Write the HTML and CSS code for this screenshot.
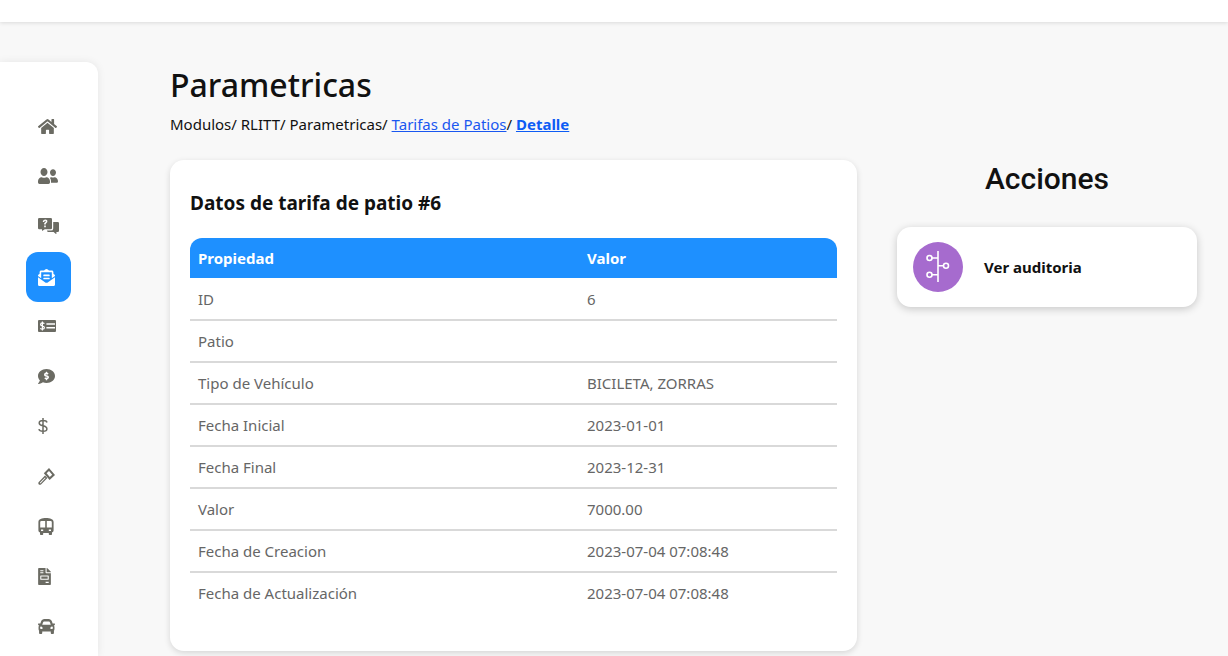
FILE: index.html
```html
<!DOCTYPE html>
<html lang="es">
<head>
<meta charset="utf-8">
<title>Parametricas</title>
<link rel="stylesheet" href="styles.css">
</head>
<body>
<header class="topbar"></header>
<div class="shell">
  <nav class="sidebar">
    <a class="nav-item"><svg class="ico i-home" viewBox="0 0 576 512"><path d="M280.37 148.26L96 300.11V464a16 16 0 0 0 16 16l112.06-.29a16 16 0 0 0 15.92-16V368a16 16 0 0 1 16-16h64a16 16 0 0 1 16 16v95.64a16 16 0 0 0 16 16.05L464 480a16 16 0 0 0 16-16V300L295.67 148.26a12.19 12.19 0 0 0-15.3 0zM571.6 251.47L488 182.56V44.05a12 12 0 0 0-12-12h-56a12 12 0 0 0-12 12v72.61L318.47 43a48 48 0 0 0-61 0L4.34 251.47a12 12 0 0 0-1.6 16.9l25.5 31A12 12 0 0 0 45.15 301l235.22-193.74a12.19 12.19 0 0 1 15.3 0L530.9 301a12 12 0 0 0 16.9-1.6l25.5-31a12 12 0 0 0-1.7-16.93z"/></svg></a>
    <a class="nav-item"><svg class="ico i-users" viewBox="0 32 640 448" preserveAspectRatio="none"><path d="M192 256c61.9 0 112-50.1 112-112S253.9 32 192 32 80 82.1 80 144s50.1 112 112 112zm76.8 32h-8.3c-20.8 10-43.9 16-68.5 16s-47.6-6-68.5-16h-8.3C51.6 288 0 339.6 0 403.2V432c0 26.5 21.5 48 48 48h288c26.5 0 48-21.5 48-48v-28.8c0-63.6-51.6-115.2-115.2-115.2zM480 256c53 0 96-43 96-96s-43-96-96-96-96 43-96 96 43 96 96 96zm48 32h-3.8c-13.9 4.8-28.6 8-44.2 8s-30.3-3.2-44.2-8H432c-20.4 0-39.2 5.9-55.7 15.4 24.4 26.3 39.7 61.2 39.7 99.8v38.4c0 2.2-.5 4.3-.6 6.4H592c26.5 0 48-21.5 48-48 0-61.9-50.1-112-112-112z"/></svg></a>
    <a class="nav-item"><svg class="ico i-help" viewBox="0 0 21 16"><path fill-rule="evenodd" d="M1.2 0 H12.8 Q14 0 14 1.2 V10 Q14 11.2 12.8 11.2 H6.8 L4 13 V11.2 H1.2 Q0 11.2 0 10 V1.2 Q0 0 1.2 0 Z M4.7 4 H6.3 Q6.4 2.8 7.1 2.8 Q8.1 2.8 7.7 3.7 L6.2 5.3 V6.6 H7.8 V5.8 L9.2 4.2 Q10 1.4 7.1 1.4 Q4.9 1.4 4.7 4 Z M6.2 7.5 V9.2 H7.8 V7.5 Z"/><path d="M15.2 4 H19.8 Q21 4 21 5.2 V12.8 Q21 14 19.8 14 H18.4 V16.4 L15.6 14 H10 Q9 14 9 12.6 H13 Q15.2 12.6 15.2 10.4 Z"/></svg></a>
    <a class="nav-item is-active"><svg class="ico i-env" viewBox="0 0 512 512"><path d="M176 216h160c8.84 0 16-7.16 16-16v-16c0-8.84-7.16-16-16-16H176c-8.84 0-16 7.16-16 16v16c0 8.84 7.16 16 16 16zm-16 80c0 8.84 7.16 16 16 16h160c8.84 0 16-7.16 16-16v-16c0-8.84-7.16-16-16-16H176c-8.84 0-16 7.16-16 16v16zm96 121.13c-16.42 0-32.84-5.06-46.86-15.19L0 250.86V464c0 26.51 21.49 48 48 48h416c26.51 0 48-21.49 48-48V250.86L302.86 401.94c-14.02 10.12-30.44 15.19-46.86 15.19zm237.61-254.18c-8.85-6.94-17.24-13.47-29.61-22.81V96c0-26.51-21.49-48-48-48h-77.55c-3.04-2.2-5.87-4.26-9.04-6.56C312.6 29.17 279.2-.35 256 0c-23.2-.35-56.59 29.17-73.41 41.44-3.17 2.3-6 4.36-9.04 6.56H96c-26.51 0-48 21.49-48 48v44.14c-12.37 9.33-20.76 15.87-29.61 22.81A47.995 47.995 0 0 0 0 200.72v10.65l96 69.35V96h320v184.72l96-69.35v-10.65c0-14.74-6.78-28.67-18.39-37.77z"/></svg></a>
    <a class="nav-item"><svg class="ico i-money" viewBox="0 0 18 12"><rect width="18" height="12" rx="1"/><path class="knock" d="M6.3 3.7 Q5.9 2.9 4.4 2.9 Q2.6 2.9 2.6 4.4 Q2.6 5.6 4.4 6 Q6.4 6.4 6.4 7.7 Q6.4 9.1 4.4 9.1 Q2.8 9.1 2.4 8.2 M4.4 1.4 V10.6"/><path class="knock bars" d="M8.4 4 H17 M8.4 7.8 H17"/></svg></a>
    <a class="nav-item"><svg class="ico i-comment" viewBox="0 32 512 448" preserveAspectRatio="none"><path d="M256 32C114.62 32 0 125.12 0 240c0 49.56 21.41 95.01 57.02 130.74C44.46 421.05 2.7 465.97 2.2 466.5A7.995 7.995 0 0 0 8 480c66.26 0 115.99-31.75 140.6-51.38C181.29 440.92 217.59 448 256 448c141.38 0 256-93.12 256-208S397.38 32 256 32zm24 302.44V352c0 8.84-7.16 16-16 16h-16c-8.84 0-16-7.16-16-16v-17.73c-11.42-1.35-22.28-5.19-31.78-11.46-6.22-4.11-6.82-13.11-1.55-18.38l17.52-17.52c3.74-3.74 9.34-4.24 14.11-1.99 3.18 1.5 6.66 2.29 10.26 2.29h32.78c4.66 0 8.44-3.78 8.44-8.42 0-3.75-2.52-7.08-6.12-8.11l-50.07-14.3c-22.25-6.35-40.01-24.71-42.91-47.67-4.05-32.07 19.03-59.43 49.32-63.05V128c0-8.84 7.16-16 16-16h16c8.84 0 16 7.16 16 16v17.73c11.42 1.35 22.28 5.19 31.78 11.46 6.22 4.11 6.82 13.11 1.55 18.38l-17.52 17.52c-3.74 3.74-9.34 4.24-14.11 1.99-3.18-1.5-6.66-2.29-10.26-2.29h-32.78c-4.66 0-8.44 3.78-8.44 8.42 0 3.75 2.52 7.08 6.12 8.11l50.07 14.3c22.25 6.36 40.01 24.71 42.91 47.67 4.05 32.06-19.03 59.42-49.32 63.04z"/></svg></a>
    <a class="nav-item"><svg class="ico i-dollar" viewBox="0 0 10 16"><path d="M9 4.4 Q8.4 2.6 5 2.6 Q1.2 2.6 1.2 5 Q1.2 7.1 5 7.8 Q8.9 8.6 8.9 11 Q8.9 13.3 5 13.3 Q1.4 13.3 .9 11.2 M5 0 V16"/></svg></a>
    <a class="nav-item"><svg class="ico i-gavel" viewBox="0 0 17 17"><path fill-rule="evenodd" d="M11 0 L17 7 L11.6 12 L5.8 5.2 Z M11 3 L8.6 5.2 L11.8 9 L14.2 6.8 Z"/><path fill-rule="evenodd" d="M7 7.6 L9.4 10 L3 16.4 Q2 17.2 .8 16.4 Q-.2 15.2 .8 14 Z M7 9.4 L1.8 14.8 L2.4 15.4 L7.6 10 Z"/></svg></a>
    <a class="nav-item"><svg class="ico i-bus" viewBox="0 0 16 17"><path fill-rule="evenodd" d="M2 14.6 V16.2 Q2 17 2.8 17 H4.4 Q5.2 17 5.2 16.2 V15 H10.8 V16.2 Q10.8 17 11.6 17 H13.2 Q14 17 14 16.2 V14.6 Q15.6 14 15.6 12.6 V4 C15.6 1 12 0 8 0 C4 0 .4 1 .4 4 V12.6 Q.4 14 2 14.6 Z M3.4 3 H7.2 V9.6 H2.2 V4.2 Q2.2 3 3.4 3 Z M8.8 3 H12.6 Q13.8 3 13.8 4.2 V9.6 H8.8 Z M3 11.6 H5.2 V13 H3 Z M10.8 11.6 H13 V13 H10.8 Z"/></svg></a>
    <a class="nav-item"><svg class="ico i-file" viewBox="0 0 384 512"><path d="M288 256H96v64h192v-64zm89-151L279.1 7c-4.5-4.5-10.6-7-17-7H256v128h128v-6.1c0-6.3-2.5-12.4-7-16.9zm-153 31V0H24C10.7 0 0 10.7 0 24v464c0 13.3 10.7 24 24 24h336c13.3 0 24-10.7 24-24V160H248c-13.2 0-24-10.8-24-24zM64 72c0-4.42 3.58-8 8-8h80c4.42 0 8 3.58 8 8v16c0 4.42-3.58 8-8 8H72c-4.42 0-8-3.58-8-8V72zm0 64c0-4.42 3.58-8 8-8h80c4.42 0 8 3.58 8 8v16c0 4.42-3.58 8-8 8H72c-4.42 0-8-3.58-8-8v-16zm256 304c0 4.42-3.58 8-8 8h-80c-4.42 0-8-3.58-8-8v-16c0-4.42 3.58-8 8-8h80c4.42 0 8 3.58 8 8v16zm0-200v96c0 8.84-7.16 16-16 16H80c-8.84 0-16-7.16-16-16v-96c0-8.84 7.16-16 16-16h224c8.84 0 16 7.16 16 16z"/></svg></a>
    <a class="nav-item"><svg class="ico i-car" viewBox="0 64 512 384" preserveAspectRatio="none"><path d="M499.99 176h-59.87l-16.64-41.6C406.38 91.63 365.57 64 319.5 64h-127c-46.06 0-86.88 27.63-103.99 70.4L71.87 176H12.01C4.2 176-1.53 183.34.37 190.91l6 24C7.7 220.25 12.5 224 18.01 224h20.07C24.65 235.73 16 252.78 16 272v48c0 16.12 6.16 30.67 16 41.93V416c0 17.67 14.33 32 32 32h32c17.67 0 32-14.33 32-32v-32h256v32c0 17.67 14.33 32 32 32h32c17.67 0 32-14.33 32-32v-54.07c9.84-11.25 16-25.8 16-41.93v-48c0-19.22-8.65-36.27-22.07-48H494c5.51 0 10.31-3.75 11.64-9.09l6-24c1.89-7.57-3.84-14.91-11.65-14.91zm-352.06-17.83c7.29-18.22 24.94-30.17 44.57-30.17h127c19.63 0 37.28 11.95 44.57 30.17L384 208H128l19.93-49.83zM96 319.8c-19.2 0-32-12.76-32-31.9S76.8 256 96 256s48 28.71 48 47.85-28.8 15.95-48 15.95zm320 0c-19.2 0-48 3.19-48-15.95S396.8 256 416 256s32 12.76 32 31.9-12.8 31.9-32 31.9z"/></svg></a>
  </nav>
  <main class="content">
    <section class="main-col">
      <h1 class="page-title">Parametricas</h1>
      <p class="crumbs">Modulos/ RLITT/ Parametricas/ <a class="crumb-link" href="#">Tarifas de Patios</a>/ <a class="crumb-current" href="#">Detalle</a></p>
      <div class="card">
        <h2 class="card-title">Datos de tarifa de patio #6</h2>
        <table class="data">
          <thead><tr><th>Propiedad</th><th>Valor</th></tr></thead>
          <tbody>
            <tr><td>ID</td><td>6</td></tr>
            <tr><td>Patio</td><td></td></tr>
            <tr><td>Tipo de Vehículo</td><td>BICILETA, ZORRAS</td></tr>
            <tr><td>Fecha Inicial</td><td>2023-01-01</td></tr>
            <tr><td>Fecha Final</td><td>2023-12-31</td></tr>
            <tr><td>Valor</td><td>7000.00</td></tr>
            <tr><td>Fecha de Creacion</td><td>2023-07-04 07:08:48</td></tr>
            <tr><td>Fecha de Actualización</td><td>2023-07-04 07:08:48</td></tr>
          </tbody>
        </table>
      </div>
    </section>
    <aside class="side-col">
      <h2 class="side-title">Acciones</h2>
      <a class="action">
        <svg class="action-badge" viewBox="0 0 50 50"><circle cx="25" cy="25" r="25" fill="#a66bce"/><path d="M25 9 V40 M19 16 H25 M19 32.7 H25 M25 23.7 H30.5" fill="none" stroke="#fff" stroke-width="1.6"/><circle cx="16.5" cy="16" r="2.5" fill="none" stroke="#fff" stroke-width="1.6"/><circle cx="16.5" cy="32.7" r="2.5" fill="none" stroke="#fff" stroke-width="1.6"/><circle cx="33" cy="23.7" r="2.5" fill="none" stroke="#fff" stroke-width="1.6"/></svg>
        <span class="action-label">Ver auditoria</span>
      </a>
    </aside>
  </main>
</div>
</body>
</html>
```
FILE: styles.css
```css
* { box-sizing: border-box; }
body {
  margin: 0;
  height: 656px;
  overflow: hidden;
  background: #f8f8f8;
  font-family: "Noto Sans", "Open Sans", sans-serif;
  color: #111;
}
.topbar {
  height: 22px;
  background: #fff;
  box-shadow: 0 1px 4px rgba(0, 0, 0, .12);
}
.shell {
  display: flex;
  padding-top: 40px;
}
.sidebar {
  width: 98px;
  height: 594px;
  flex: none;
  background: #fff;
  border-radius: 0 12px 0 0;
  box-shadow: 0 0 8px rgba(0, 0, 0, .08);
  padding: 39px 0 0 26px;
  display: flex;
  flex-direction: column;
}
.nav-item {
  width: 45px;
  height: 50px;
  flex: none;
  display: flex;
  align-items: center;
  padding-left: 12px;
  border-radius: 12px;
  color: #6b6b63;
}
.is-active {
  background: #1e90ff;
  color: #fff;
  margin: 1px 0 -1px;
}
.ico { fill: currentColor; flex: none; }
.i-home { width: 19px; height: 17px; }
.i-users { width: 20px; height: 16px; }
.i-help { width: 21px; height: 16px; }
.i-env { width: 17px; height: 17px; }
.i-money { width: 18px; height: 12px; }
.knock { fill: none; stroke: #fff; stroke-width: 1.2; }
.bars { stroke-width: 1.5; }
.i-comment { width: 17px; height: 15px; }
.i-dollar { width: 10px; height: 16px; fill: none; stroke: currentColor; stroke-width: 1.5; }
.i-gavel { width: 17px; height: 17px; }
.i-bus { width: 16px; height: 17px; }
.i-file { width: 13px; height: 17px; }
.i-car { width: 17px; height: 15px; }
.content {
  flex: 1;
  display: flex;
  padding-left: 72px;
  gap: 40px;
}
.main-col { width: 687px; flex: none; }
.page-title {
  margin: 0;
  padding-top: 1px;
  font-weight: 500;
  font-size: 32px;
  line-height: 44px;
  color: #111;
}
.crumbs {
  margin: 7px 0 0;
  font-size: 15px;
  line-height: 20px;
  color: #111;
  height: 46px;
}
.crumb-link { color: #1a57f0; }
.crumb-current { color: #0d5cf5; font-weight: 700; }
.card {
  background: #fff;
  border-radius: 14px;
  height: 491px;
  padding: 25px 20px 20px;
  box-shadow: 0 2px 6px rgba(0, 0, 0, .14);
}
.card-title {
  margin: 0 0 16px;
  font-size: 19px;
  font-weight: 700;
  line-height: 37px;
  color: #111;
}
.data {
  width: 100%;
  border-collapse: collapse;
  table-layout: fixed;
  font-size: 15px;
  color: #666;
}
.data th {
  height: 40px;
  background: #1e90ff;
  color: #fff;
  font-weight: 700;
  text-align: left;
  padding: 0 8px;
}
.data th:first-child { border-top-left-radius: 12px; width: 389px; }
.data th:last-child { border-top-right-radius: 12px; }
.data td {
  height: 42px;
  padding: 0 8px;
  border-bottom: 2px solid #d9d9d9;
}
.data tr:last-child td { border-bottom-color: transparent; }
.side-col { width: 300px; flex: none; padding-top: 95px; }
.side-title {
  margin: 0;
  text-align: center;
  font-family: Roboto, sans-serif;
  font-weight: 500;
  font-size: 30px;
  line-height: 44px;
  color: #111;
}
.action {
  margin-top: 26px;
  height: 80px;
  background: #fff;
  border-radius: 14px;
  box-shadow: 0 2px 8px rgba(0, 0, 0, .2);
  display: flex;
  align-items: center;
  padding-left: 16px;
  gap: 21px;
}
.action-badge { width: 50px; height: 50px; flex: none; }
.action-label { font-size: 15px; font-weight: 700; color: #111; }
```
